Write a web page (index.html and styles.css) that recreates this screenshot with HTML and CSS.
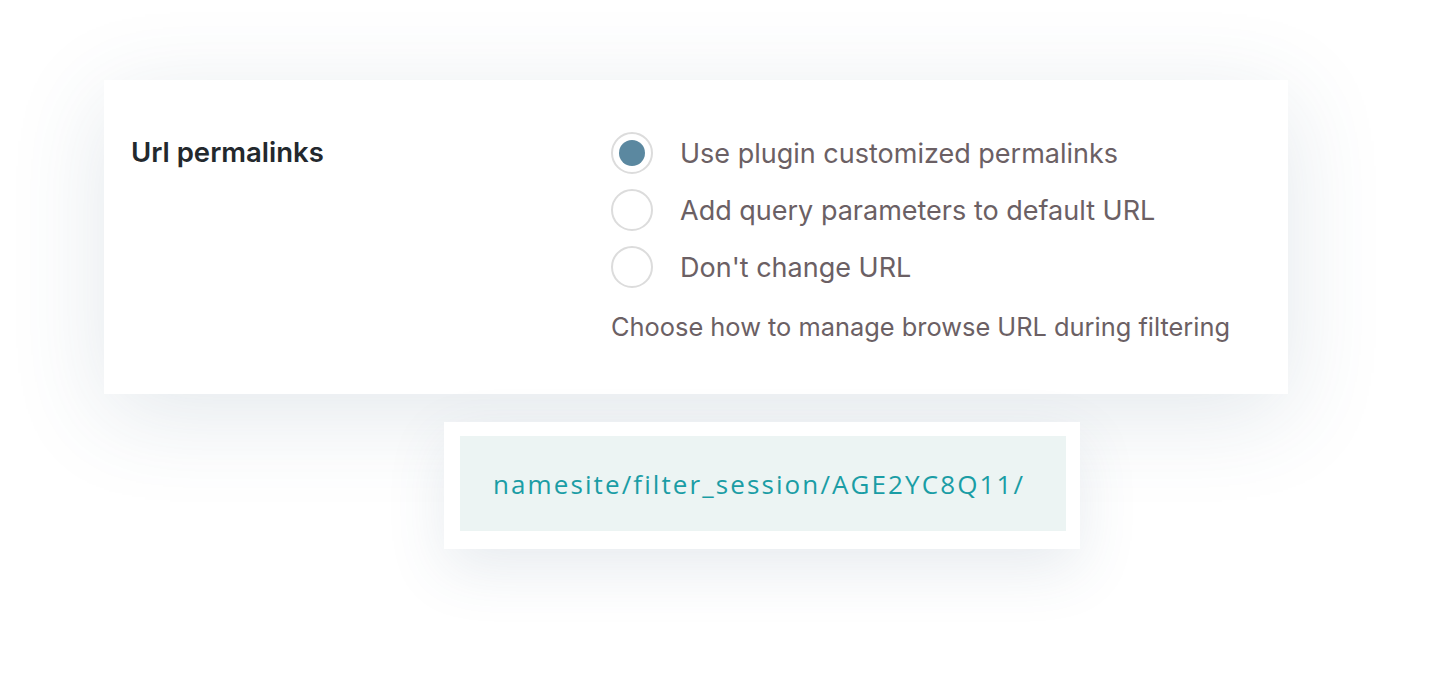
FILE: index.html
```html
<!DOCTYPE html>
<html lang="en">
<head>
  <meta charset="UTF-8">
  <meta name="viewport" content="width=device-width, initial-scale=1.0">
  <title>Url permalinks</title>
  <link rel="stylesheet" href="styles.css">
</head>
<body>
  <div class="page">
    <div class="card">
      <h2 class="setting-title">Url permalinks</h2>
      <div class="setting-options">
        <label class="option">
          <input type="radio" name="permalinks" checked>
          <span class="radio"></span>
          <span class="option-text">Use plugin customized permalinks</span>
        </label>
        <label class="option">
          <input type="radio" name="permalinks">
          <span class="radio"></span>
          <span class="option-text">Add query parameters to default URL</span>
        </label>
        <label class="option">
          <input type="radio" name="permalinks">
          <span class="radio"></span>
          <span class="option-text">Don't change URL</span>
        </label>
        <p class="help">Choose how to manage browse URL during filtering</p>
      </div>
    </div>
    <div class="url-box">
      <div class="url-inner">namesite/filter_session/AGE2YC8Q11/</div>
    </div>
  </div>
</body>
</html>
```

FILE: styles.css
```css
body {
  margin: 0;
  padding: 0;
  background-color: #fff;
  font-family: Inter, "Liberation Sans", Arial, sans-serif;
}

.page {
  padding: 80px 0 120px 104px;
}

.card {
  width: 1184px;
  box-sizing: border-box;
  padding: 52px 27px 52px 27px;
  background-color: #fff;
  display: grid;
  grid-template-columns: 480px 1fr;
  box-shadow: 0 20px 90px rgba(60, 90, 120, 0.14);
}

.setting-title {
  margin: 3px 0 0;
  font-size: 27.5px;
  font-weight: 600;
  color: #23282d;
}

.setting-options {
  display: flex;
  flex-direction: column;
  gap: 15px;
}

.option {
  display: flex;
  align-items: center;
  gap: 27px;
  cursor: pointer;
}

.option input {
  display: none;
}

.radio {
  width: 42px;
  height: 42px;
  box-sizing: border-box;
  border: 2px solid #dcdcdc;
  border-radius: 50%;
  display: flex;
  align-items: center;
  justify-content: center;
}

.option input:checked + .radio::after {
  content: "";
  width: 26px;
  height: 26px;
  border-radius: 50%;
  background-color: #5b88a0;
}

.option-text {
  font-size: 27px;
  color: #6b6064;
}

.help {
  margin: 9px 0 0;
  font-size: 25.4px;
  line-height: 30px;
  color: #6b6064;
}

.url-box {
  width: 636px;
  box-sizing: border-box;
  margin: 28px 0 0 340px;
  padding: 14px 14px 18px 16px;
  background-color: #fff;
  box-shadow: 0 20px 60px rgba(60, 90, 120, 0.12);
}

.url-inner {
  height: 95px;
  display: flex;
  align-items: center;
  padding-left: 33px;
  background-color: #ecf4f3;
  font-family: "Open Sans", sans-serif;
  font-weight: 500;
  font-size: 26px;
  letter-spacing: 2.1px;
  color: #1a9da5;
}
```
